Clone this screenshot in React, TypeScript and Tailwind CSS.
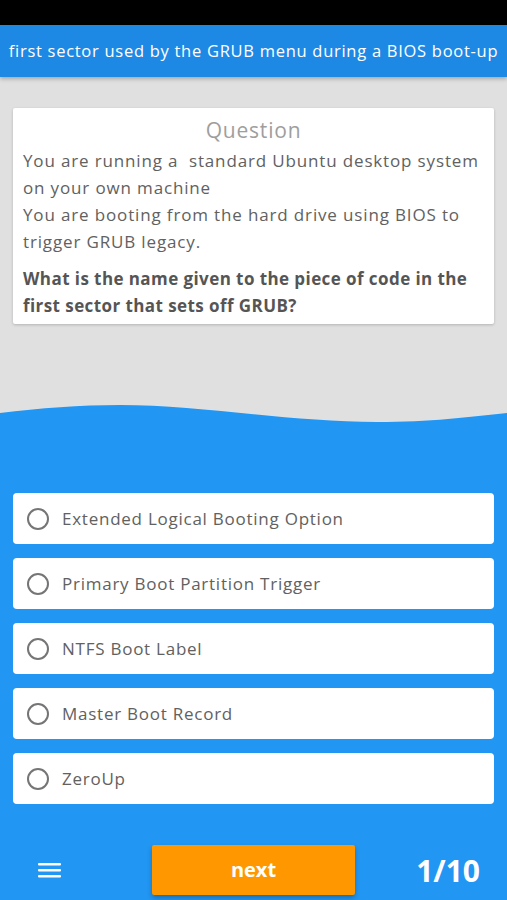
import React from "react";

const options = [
  "Extended Logical Booting Option",
  "Primary Boot Partition Trigger",
  "NTFS Boot Label",
  "Master Boot Record",
  "ZeroUp",
];

export default function App() {
  return (
    <div
      className="w-[507px] h-[900px] flex flex-col overflow-hidden bg-[#2196f3]"
      style={{ fontFamily: '"Open Sans", "Liberation Sans", sans-serif' }}
    >
      <div className="h-[25px] bg-black shrink-0" />
      <div className="h-[52px] shrink-0 bg-[#1e88e5] flex items-center justify-center text-white text-[16.5px] tracking-[0.72px] whitespace-nowrap shadow-[0_2px_4px_rgba(0,0,0,0.25)] relative z-10">
        first sector used by the GRUB menu during a BIOS boot-up
      </div>
      <div className="h-[326px] shrink-0 bg-[#e0e0e0] pt-[31px] px-[13px]">
        <div className="bg-white rounded-[2px] shadow-[0_1px_3px_rgba(0,0,0,0.2)] px-[10px] pt-[6px] pb-[5px] text-[#616161] whitespace-nowrap">
          <div className="text-center text-[21px] leading-[33px] tracking-[0.8px] text-[#9e9e9e]">Question</div>
          <div className="text-[17px] leading-[27px] tracking-[0.85px]">
            You are running a&nbsp; standard Ubuntu desktop system
            <br />
            on your own machine
            <br />
            You are booting from the hard drive using BIOS to
            <br />
            trigger GRUB legacy.
          </div>
          <div className="mt-[10px] text-[17px] leading-[27px] tracking-[0.42px] font-bold text-[#555555]">
            What is the name given to the piece of code in the
            <br />
            first sector that sets off GRUB?
          </div>
        </div>
      </div>
      <svg className="block shrink-0 bg-[#e0e0e0]" width="507" height="20" viewBox="0 0 507 20" preserveAspectRatio="none">
        <path d="M0,10 C40,5 80,2 120,2 C200,2 290,19 377,19 C430,19 470,14 507,10 L507,20 L0,20 Z" fill="#2196f3" />
      </svg>
      <div className="flex-1 flex flex-col px-[13px] pt-[70px]">
        <div className="flex flex-col gap-[14px]">
          {options.map((o) => (
            <div key={o} className="h-[51px] bg-white rounded-[4px] flex items-center pl-[14px] text-[#616161] text-[17px] tracking-[0.75px]">
              <span className="w-[22px] h-[22px] rounded-full border-[2px] border-[#757575] shrink-0" />
              <span className="ml-[13px]">{o}</span>
            </div>
          ))}
        </div>
        <div className="mt-[41px] grid grid-cols-[1fr_203px_1fr] items-center -mx-[13px]">
          <div className="flex pl-[38px]">
            <svg width="23" height="18" viewBox="0 0 23 18">
              <rect x="0" y="2" width="23" height="2.4" rx="1" fill="white" />
              <rect x="0" y="8" width="23" height="2.4" rx="1" fill="white" />
              <rect x="0" y="14" width="23" height="2.4" rx="1" fill="white" />
            </svg>
          </div>
          <div className="h-[50px] bg-[#ff9800] rounded-[2px] flex items-center justify-center text-white font-bold text-[20px] shadow-[0_3px_5px_rgba(0,0,0,0.25)]">
            next
          </div>
          <div className="flex justify-end pr-[27px] text-white font-bold text-[30px]">1/10</div>
        </div>
      </div>
    </div>
  );
}
